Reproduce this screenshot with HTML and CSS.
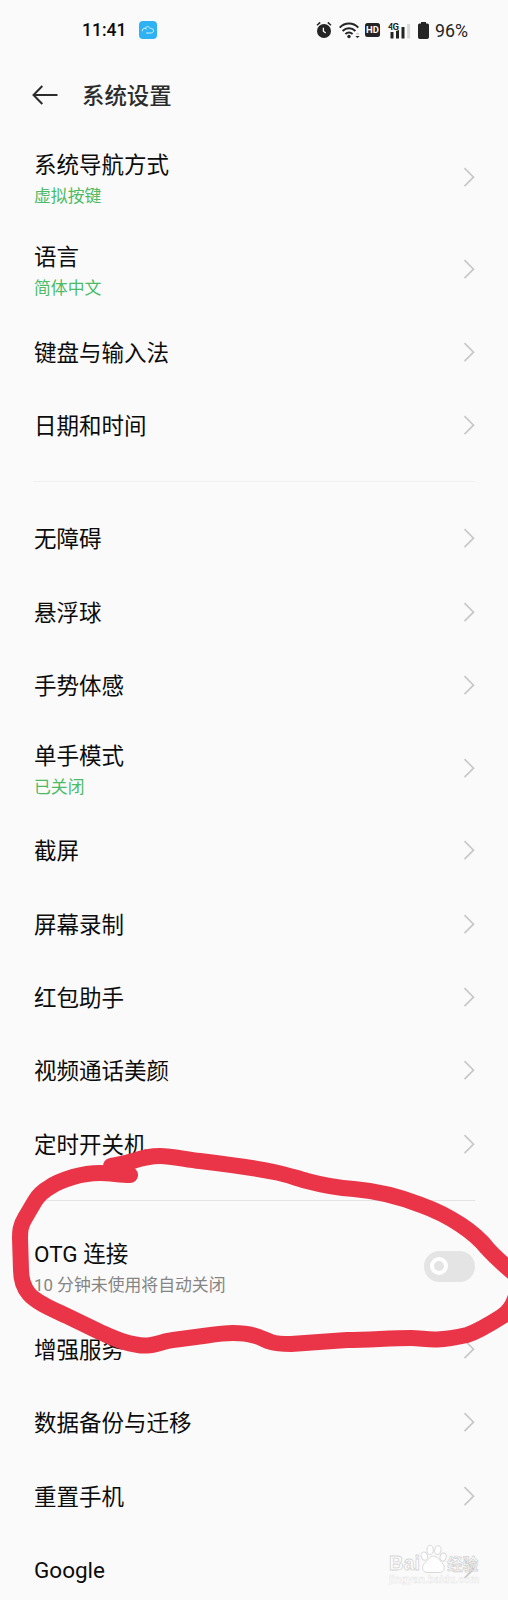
FILE: index.html
```
<!DOCTYPE html>
<html lang="zh-CN">
<head>
  <meta charset="UTF-8" />
  <meta name="viewport" content="width=device-width, initial-scale=1.0" />
  <title>系统设置</title>
  <link rel="stylesheet" href="styles.css">
</head>
<body>
  <svg width="0" height="0" class="defs">
    <symbol id="chevron" viewBox="0 0 12 20">
      <path d="M1.500 1.200l9 9L1.500 19.200" fill="none" stroke="#c8c8c8" stroke-width="1.700" />
    </symbol>
  </svg>

  <div class="status-bar">
    <span class="time">11:41</span>
    <svg class="cloud" width="18" height="18" viewBox="0 0 18 18">
      <rect width="18" height="18" rx="4" fill="#2fb2f3" />
      <path d="M3.300 10.200C3 8.400 4.400 7.200 6 7.300C7 5 10.300 5.200 11.200 7.400C13.400 7.200 14.800 8.500 14.500 10.200C14.200 11.600 13 12 11.500 12H7.200M6 7.300Q7.200 7.400 8 8.600" fill="none" stroke="#d9f2ff" stroke-width="1" />
    </svg>
    <div class="status-icons">
      <svg class="alarm" width="16" height="18" viewBox="0 0 16 18">
        <circle cx="8" cy="10" r="7" fill="#242424" />
        <path d="M1 4.200L4.200 1.400M15 4.200L11.800 1.400" stroke="#242424" stroke-width="1.500" />
        <path d="M7.400 6.800v3.500l2.300 1.800" fill="none" stroke="#fafafa" stroke-width="1.300" />
      </svg>
      <svg class="wifi" width="21" height="17" viewBox="0 0 21 17">
        <path d="M.7 5.600C6 .2 14 .2 19.300 5.600M3.600 8.900C7.400 5.300 12.600 5.300 16.400 8.900M6.400 12C8.700 10 11.300 10 13.600 12" fill="none" stroke="#242424" stroke-width="2" />
        <circle cx="10" cy="14.500" r="1.700" fill="#242424" />
        <path d="M16.300 12.600l2.200-2 2.200 2z" fill="#ccc" />
        <path d="M16.300 14l2.200 2 2.200-2z" fill="#242424" />
      </svg>
      <span class="hd">HD</span>
      <svg class="signal" width="23" height="17" viewBox="0 0 23 17">
        <path d="M4 10v6.500M9.500 8v8.500M15 5v11.500" stroke="#242424" stroke-width="3" />
        <path d="M20.600 2v14.500" stroke="#d8d8d8" stroke-width="3" />
        <text x="0" y="7.500" font-size="9.500" font-weight="700" fill="#242424" stroke="#fafafa" stroke-width="1.500" paint-order="stroke" textLength="11">4G</text>
      </svg>
      <svg class="battery" width="11" height="17" viewBox="0 0 11 17">
        <path d="M3 0h5v1.400h1.500Q11 1.400 11 3v12q0 2-1.800 2H1.800Q0 17 0 15V3Q0 1.400 1.500 1.400H3z" fill="#242424" />
      </svg>
      <span class="percent">96%</span>
    </div>
  </div>

  <header>
    <svg width="26" height="20" viewBox="0 0 26 20">
      <path d="M25.500 10H1.500M10.300 1L1.500 10l8.800 9" fill="none" stroke="#2c2c2c" stroke-width="2" />
    </svg>
    <h1>系统设置</h1>
  </header>

  <main>
    <section>
      <div class="row double"><div><p class="title">系统导航方式</p><p class="sub">虚拟按键</p></div><svg class="chevron"><use href="#chevron" /></svg></div>
      <div class="row double"><div><p class="title">语言</p><p class="sub">简体中文</p></div><svg class="chevron"><use href="#chevron" /></svg></div>
      <div class="row"><p class="title">键盘与输入法</p><svg class="chevron"><use href="#chevron" /></svg></div>
      <div class="row"><p class="title">日期和时间</p><svg class="chevron"><use href="#chevron" /></svg></div>
    </section>

    <section class="light">
      <div class="row"><p class="title">无障碍</p><svg class="chevron"><use href="#chevron" /></svg></div>
      <div class="row"><p class="title">悬浮球</p><svg class="chevron"><use href="#chevron" /></svg></div>
      <div class="row"><p class="title">手势体感</p><svg class="chevron"><use href="#chevron" /></svg></div>
      <div class="row double"><div><p class="title">单手模式</p><p class="sub">已关闭</p></div><svg class="chevron"><use href="#chevron" /></svg></div>
      <div class="row"><p class="title">截屏</p><svg class="chevron"><use href="#chevron" /></svg></div>
      <div class="row"><p class="title">屏幕录制</p><svg class="chevron"><use href="#chevron" /></svg></div>
      <div class="row"><p class="title">红包助手</p><svg class="chevron"><use href="#chevron" /></svg></div>
      <div class="row"><p class="title">视频通话美颜</p><svg class="chevron"><use href="#chevron" /></svg></div>
      <div class="row"><p class="title">定时开关机</p><svg class="chevron"><use href="#chevron" /></svg></div>
    </section>

    <section>
      <div class="row double"><div><p class="title">OTG 连接</p><p class="sub grey">10 分钟未使用将自动关闭</p></div><span class="switch"></span></div>
      <div class="row"><p class="title">增强服务</p><svg class="chevron"><use href="#chevron" /></svg></div>
      <div class="row"><p class="title">数据备份与迁移</p><svg class="chevron"><use href="#chevron" /></svg></div>
      <div class="row"><p class="title">重置手机</p><svg class="chevron"><use href="#chevron" /></svg></div>
      <div class="row"><p class="title">Google</p><svg class="chevron"><use href="#chevron" /></svg></div>
    </section>
  </main>

  <!-- hand-drawn circle around the OTG switch -->
  <svg class="marker" width="508" height="240" viewBox="0 1130 508 240">
    <path d="M130 1175C120 1175 110 1173 100 1173C88 1173 80 1175 73 1177C60 1181 54 1184 50 1187C43 1191 38 1196 35 1201L25 1218C20 1226 20 1232 20 1238L21 1270C21 1280 24 1288 29 1294C37 1303 52 1309 67 1316L100 1332C107 1335 115 1339 123 1341.500C135 1345 141 1346 147 1345.500C156 1345 164 1341 173 1340L207 1335.500C217 1334 225 1333 233 1333C241 1333 247 1333.500 254 1335.500C260 1337 265 1340 271 1342C277 1344 284 1344 291 1344L347 1340C369 1340 390 1338 411 1338C420 1338 428 1340 437 1339.500C447 1339 458 1337 467 1335C479 1331 490 1324 501 1317C509 1312 513 1306 517 1293V1276C504 1265 495 1257 487 1248C480 1239 470 1231 461 1225C449 1217 435 1210 421 1205C398 1196 377 1191 354 1189C338 1188 322 1185 307 1181C296 1178 285 1174 274 1172C250 1167 225 1164 200 1161C187 1160 173 1156 160 1156C150 1156 142 1158 133 1161C126 1163 119 1165 111 1166L130 1175" fill="none" stroke="#ea3548" stroke-width="16" stroke-linecap="round" stroke-linejoin="round" />
  </svg>

  <div class="watermark">
    <div class="brand">
      <span>Bai</span>
      <svg width="27" height="30" viewBox="0 0 28 30">
        <g fill="#fff" stroke="#d0d0d0" stroke-width="1">
          <ellipse cx="4.500" cy="12" rx="3.300" ry="4.300" transform="rotate(-15 4.500 12)" />
          <ellipse cx="10.500" cy="5.500" rx="3.300" ry="4.700" />
          <ellipse cx="18.500" cy="5.800" rx="3.300" ry="4.700" transform="rotate(10 18.500 5.800)" />
          <ellipse cx="24" cy="13" rx="3.200" ry="4.300" transform="rotate(15 24 13)" />
          <path d="M14 12C18 12 20 16 23 19C27 23 25 29 20 29H8C2 29 1 23 5 19C9 16 10 12 14 12z" />
        </g>
        <text x="7" y="26" class="du">du</text>
      </svg>
      <span class="cn">经验</span>
    </div>
    <div class="site">jingyan.baidu.com</div>
  </div>
</body>
</html>
```
FILE: styles.css
```
body {
  position: relative;
  height: 1600px;
  margin: 0;
  overflow: hidden;
  background: #fafafa;
  color: #0c0c0c;
  font-family: Roboto, "Noto Sans CJK SC", sans-serif;
}
h1, p {
  margin: 0;
}
.defs {
  position: absolute;
}
.status-bar {
  display: flex;
  align-items: center;
  height: 60px;
  padding: 0 38px 0 82px;
}
.time {
  width: 57px;
  font-size: 17.5px;
  font-weight: 500;
  white-space: nowrap;
}
.status-icons {
  display: flex;
  align-items: center;
  margin-left: auto;
}
.alarm {
  margin: -1px 0 0 -1px;
}
.wifi {
  margin-left: 7px;
}
.hd {
  width: 15px;
  height: 14px;
  margin-left: 5px;
  border-radius: 2.5px;
  background: #242424;
  color: #fafafa;
  font-size: 9.5px;
  font-weight: 700;
  line-height: 14px;
  text-align: center;
}
.signal {
  margin-left: 8px;
}
.battery {
  margin-left: 7px;
}
.percent {
  width: 35px;
  margin-left: 6px;
  color: #242424;
  font-size: 17.8px;
}
header {
  display: flex;
  align-items: center;
  height: 71.6px;
  padding-left: 32px;
}
header svg {
  margin-top: -2px;
}
h1 {
  margin: -3px 0 0 24px;
  color: #2c2c2c;
  font-size: 22.4px;
  font-weight: 500;
}
main {
  padding: 0 33px;
}
section + section {
  margin-top: 19px;
  padding-top: 19.7px;
  border-top: 1px solid #e3e3e3;
}
section.light {
  border-top-color: #f0f0f0;
}
.row {
  display: flex;
  align-items: center;
  justify-content: space-between;
  height: 73.4px;
  padding-left: 1px;
}
.double {
  height: 91.8px;
}
.title {
  padding-top: 3px;
  font-size: 22.5px;
  line-height: 37px;
}
.double .title {
  padding-top: 2px;
}
.sub {
  color: #4dba66;
  font-size: 16.85px;
  line-height: 25px;
}
.grey {
  color: #858585;
}
.chevron {
  width: 12px;
  height: 20px;
}
.switch {
  display: flex;
  align-items: center;
  width: 51px;
  height: 31px;
  padding-left: 6px;
  border-radius: 16px;
  background: #e4e4e4;
  box-sizing: border-box;
}
.switch::before {
  content: "";
  width: 10px;
  height: 10px;
  border: 4px solid #fff;
  border-radius: 50%;
}
.marker {
  position: absolute;
  left: 0;
  top: 1130px;
}
.watermark {
  position: absolute;
  left: 389px;
  top: 1544px;
  width: 92px;
  color: #fff;
  opacity: 0.8;
  -webkit-text-stroke: 0.8px #cdcdcd;
}
.brand {
  display: flex;
  align-items: flex-end;
  height: 30px;
  font: 700 20px/22px "Liberation Sans", sans-serif;
}
.brand .cn {
  font: 700 15.5px/22px "Noto Sans CJK SC", sans-serif;
}
.du {
  fill: #fff;
  font-size: 13px;
}
.site {
  font: 700 10.3px/12px "Liberation Sans", sans-serif;
  -webkit-text-stroke: 0.4px #dedede;
}
```
